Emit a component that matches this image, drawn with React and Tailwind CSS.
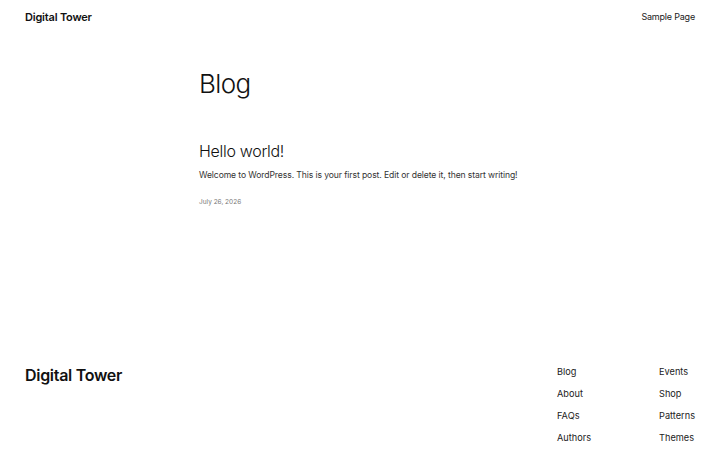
import React from 'react';

const font = { fontFamily: 'Inter, "Noto Sans", sans-serif' };

function Header() {
    return (
        <header className="flex items-center justify-between px-[25px] pt-[10px] h-[24px]">
            <a className="text-[11px] font-semibold tracking-[-0.2px] text-[#111]">Digital Tower</a>
            <a className="text-[9px] tracking-[-0.2px] text-[#222]">Sample Page</a>
        </header>
    );
}

function Post() {
    return (
        <article className="mt-[40px]">
            <h2 className="text-[16px] leading-[22px] font-light tracking-[-0.3px] text-[#111]">Hello world!</h2>
            <p className="mt-[6px] whitespace-nowrap text-[8.6px] leading-[14px] tracking-[-0.1px] text-[#333]">
                Welcome to WordPress. This is your first post. Edit or delete it, then start writing!
            </p>
            <p className="mt-[15px] text-[6.5px] leading-[10px] text-[#777]">July 26, 2026</p>
        </article>
    );
}

const footerLinks = [
    ['Blog', 'About', 'FAQs', 'Authors'],
    ['Events', 'Shop', 'Patterns', 'Themes'],
];

function Footer() {
    return (
        <footer className="mt-auto flex items-start justify-between px-[25px] pb-[5px]">
            <div className="text-[16px] leading-[20px] font-semibold tracking-[-0.3px] text-[#111]">Digital Tower</div>
            <div className="flex">
                {footerLinks.map((col, i) => (
                    <ul key={i} className={`flex flex-col gap-[8px] text-[9.2px] leading-[14px] text-[#222] ${i === 0 ? 'w-[102px]' : ''}`}>
                        {col.map((l) => (
                            <li key={l}>{l}</li>
                        ))}
                    </ul>
                ))}
            </div>
        </footer>
    );
}

export default function App() {
    return (
        <div className="flex flex-col w-[720px] h-[450px] overflow-hidden bg-white" style={font}>
            <Header />
            <main className="mx-auto w-[322px] pt-[44px]">
                <h1 className="text-[26px] leading-[32px] font-light tracking-[-0.6px] text-[#111]">Blog</h1>
                <Post />
            </main>
            <Footer />
        </div>
    );
}
